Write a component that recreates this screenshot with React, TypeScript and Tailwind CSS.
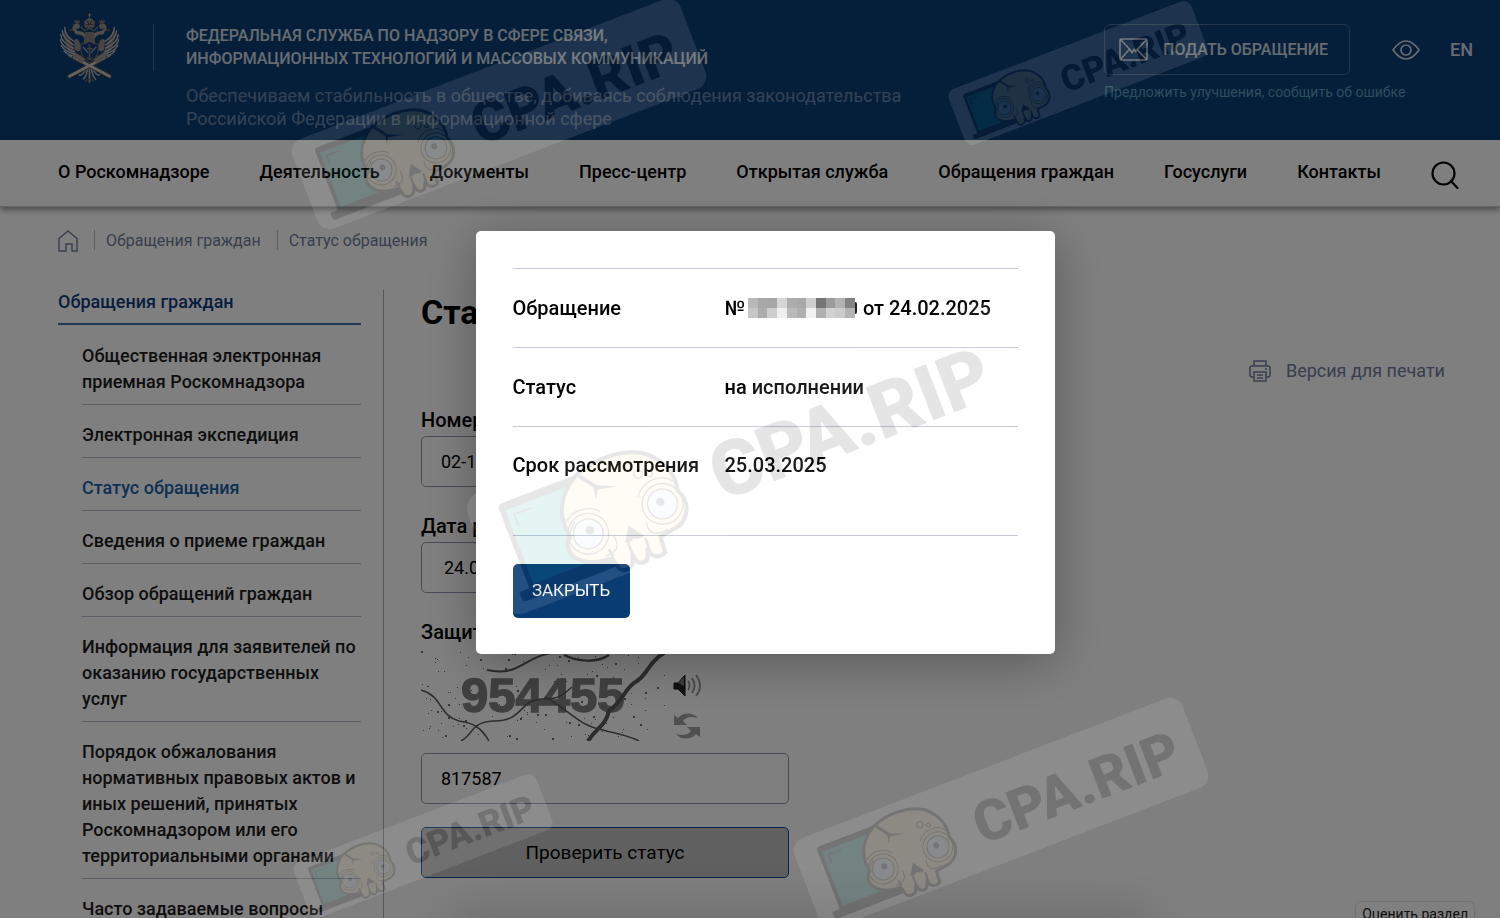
import { useState } from "react";

const navItems = [
  "О Роскомнадзоре",
  "Деятельность",
  "Документы",
  "Пресс-центр",
  "Открытая служба",
  "Обращения граждан",
  "Госуслуги",
  "Контакты",
];

const sideItems = [
  { title: "Общественная электронная приемная Роскомнадзора" },
  { title: "Электронная экспедиция" },
  { title: "Статус обращения", active: true },
  { title: "Сведения о приеме граждан" },
  { title: "Обзор обращений граждан" },
  { title: "Информация для заявителей по оказанию государственных услуг" },
  {
    title:
      "Порядок обжалования нормативных правовых актов и иных решений, принятых Роскомнадзором или его территориальными органами",
  },
  { title: "Часто задаваемые вопросы" },
];

// Greys of the blurred-out request number, two rows of cells
const mosaic = [
  ["#b9b9b9", "#a8a8a8", "#a6a6a6", "#d6d6d6", "#adadad", "#a9a9a9", "#cfcfcf", "#757575", "#9b9b9b", "#b3b3b3", "#838383"],
  ["#c6c6c6", "#ababab", "#cdcdcd", "#efefef", "#bababa", "#b0b0b0", "#f1f1f1", "#b0b0b0", "#d2d2d2", "#cccccc", "#b5b5b5"],
];

function Emblem() {
  const wing = (
    <g>
      <path d="M100 152C84 148 76 138 70 124C66 106 56 90 44 74C42 108 50 132 70 150C82 160 94 160 100 152Z" fill="#77726f" />
      <g stroke="#c6c1bd" strokeWidth="4" strokeLinecap="round" fill="none">
        <path d="M46 66C46 84 56 96 74 108" />
        <path d="M39 76C39 92 52 106 72 118" />
        <path d="M34 88C35 104 50 118 72 128" />
        <path d="M33 103C36 118 52 130 74 138" />
        <path d="M36 120C42 132 58 142 78 146" />
        <path d="M44 136C52 146 66 152 84 152" />
        <path d="M58 150C68 158 80 160 92 156" />
      </g>
      <path d="M74 104C86 92 92 112 96 128C90 140 84 140 76 132Z" fill="#918b86" />
      <path d="M112 104C108 88 98 82 86 82C80 84 78 78 82 74" fill="none" stroke="#a29c97" strokeWidth="10" />
      <path d="M70 76C66 64 74 52 84 54C92 56 94 64 88 70L78 70L76 78Z" fill="#98918a" />
      <path d="M74 52L76 42L81 48L84 40L87 48L92 44L90 54Z" fill="#7d756d" />
      <path d="M64 70L56 74L64 78L72 76Z" fill="#5f5952" />
    </g>
  );
  return (
    <svg viewBox="26 20 188 212" className="h-[71px] w-[63px] shrink-0" aria-label="Герб">
      {wing}
      <g transform="translate(240 0) scale(-1 1)">{wing}</g>
      <path d="M106 66L104 48L112 42L120 36L128 42L136 48L134 66Z" fill="#8f8780" />
      <path d="M108 58H132M112 46L120 58L128 46" stroke="#4d4740" strokeWidth="3" fill="none" />
      <path d="M120 36V24M115 29H125" stroke="#aaa49e" strokeWidth="3" />
      <path d="M94 64L106 76L120 68L134 76L146 64" stroke="#7d756d" strokeWidth="4" fill="none" />
      <path d="M108 80H132L138 116H102Z" fill="#88817b" />
      <path d="M94 116C104 116 112 114 120 108C128 114 136 116 146 116C148 148 138 162 120 172C102 162 92 148 94 116Z" fill="#123a76" stroke="#77716c" strokeWidth="3" />
      <path d="M120 116V164M112 130H129M113 156C116 162 124 162 127 156" stroke="#777069" strokeWidth="5" fill="none" />
      <path d="M100 124L116 142M140 124L124 142" stroke="#9fb4d3" strokeWidth="3" />
      <g stroke="#aea8a2" strokeWidth="5" strokeLinecap="round" fill="none">
        <path d="M120 188V228" />
        <path d="M114 190C112 204 108 216 102 220" />
        <path d="M126 190C128 204 132 216 138 220" />
        <path d="M110 188C102 204 96 210 90 208" />
        <path d="M130 188C138 204 144 210 150 208" />
        <path d="M108 226C114 220 126 220 132 226" stroke="#66615c" />
      </g>
      <path d="M60 212L166 156M180 212L74 156" stroke="#4d4844" strokeWidth="14" strokeLinecap="round" />
      <path d="M60 212L166 156M180 212L74 156" stroke="#c9c4be" strokeWidth="8" strokeLinecap="round" />
      <path d="M78 152L98 164M162 152L142 164" stroke="#9a948e" strokeWidth="15" strokeLinecap="round" />
    </svg>
  );
}

function Stamp({ className }: { className: string }) {
  return (
    <svg
      viewBox="0 0 416 96"
      aria-hidden="true"
      className={`absolute -translate-x-1/2 -translate-y-1/2 -rotate-[21deg] opacity-10 ${className}`}
    >
      <rect width="416" height="96" rx="14" fill="#fff" />
      <path d="M23 81V18Q23 14 27 14H98V81Z" fill="#1c1c1c" />
      <path d="M27 78V20H94V78Z" fill="#00a89f" />
      <path d="M32 34V25H46" fill="none" stroke="#1c1c1c" strokeWidth="1.5" />
      <path d="M15 80H104V88H18Q15 88 15 85Z" fill="#1c1c1c" />
      <path
        d="M65 55C61 39 68 24 84 15C100 8 123 8 137 17C149 26 154 39 151 52C157 63 151 74 141 77L127 79L126 91Q120 94 116 89L115 84L112 91Q108 94 104 90L103 84L100 91Q94 95 90 90L88 81C76 81 65 77 61 68C59 62 61 58 65 55Z"
        fill="#fbe99a"
        stroke="#1c1c1c"
        strokeWidth="3"
        strokeLinejoin="round"
      />
      <path d="M103 85V75M116 85V76M89 80L88 74" stroke="#1c1c1c" strokeWidth="2" />
      <g fill="none" stroke="#1c1c1c" strokeWidth="1">
        <circle cx="78" cy="58" r="15" />
        <circle cx="137" cy="57" r="15" />
        <path d="M66 44C74 36 88 40 92 46M122 46C128 36 144 35 150 44M66 52L72 46" />
        <path d="M95 66C97 76 92 78 84 78M121 65C119 76 126 77 134 76" />
        <circle cx="128" cy="30" r="3" />
        <circle cx="136" cy="33" r="2" />
      </g>
      <g fill="#d9ebff" stroke="#1c1c1c" strokeWidth="1">
        <circle cx="78" cy="58" r="11" />
        <circle cx="137" cy="57" r="11" />
      </g>
      <circle cx="80" cy="56" r="3" fill="#1c1c1c" />
      <circle cx="136" cy="55" r="3" fill="#1c1c1c" />
      <path d="M84 14L94 28L92 37L96 30L111 33L97 27L88 15Z" fill="#1c1c1c" />
      <path d="M108 63Q112 69 116 74Q112 76 108 73Q104 76 101 74Q104 69 108 63Z" fill="#1c1c1c" />
      <text x="179" y="71" fontSize="57" fontWeight="900" fill="#111" fontFamily="Roboto, Liberation Sans, sans-serif">
        CPA.RIP
      </text>
    </svg>
  );
}

// Noise specks of the captcha, spread with a small fixed generator
const specks = Array.from({ length: 150 }, (_, i) => ({
  x: (i * 73 + ((i * i) % 29) * 7) % 244,
  y: (i * 37 + ((i * i) % 17) * 5) % 89,
  r: i % 4 === 0 ? 2 : 1,
}));

function Captcha() {
  return (
    <svg viewBox="0 0 246 90" className="h-[90px] w-[246px]" role="img" aria-label="Защитный код">
      {specks.map((s, i) => (
        <rect key={i} x={s.x} y={s.y} width={s.r} height={s.r} fill="#6b6b6b" />
      ))}
      <text
        x="40"
        y="61"
        fontSize="49"
        fontWeight="700"
        fill="#808080"
        stroke="#808080"
        strokeWidth="1.5"
        fontFamily="Liberation Sans, sans-serif"
      >
        954455
      </text>
      <g fill="none" stroke="#5a5a5a">
        <path d="M0 39C22 45 17 64 38 70C52 72 60 76 68 90" strokeWidth="1.5" />
        <path d="M40 90C52 84 50 71 72 70C104 71 98 46 124 48C138 48 142 44 151 36" strokeWidth="1.5" />
        <path d="M124 46C150 60 156 74 182 79C196 83 206 84 218 90" strokeWidth="1.5" />
        <path d="M66 19C98 26 103 6 130 2" strokeWidth="2" />
        <path d="M143 4C157 11 176 12 188 4" strokeWidth="2.5" />
        <path d="M167 90C176 76 184 76 188 60C204 48 204 36 216 30C228 22 226 12 246 0" strokeWidth="4" />
      </g>
    </svg>
  );
}

export default function App() {
  const [open, setOpen] = useState(true);
  const [requestNumber, setRequestNumber] = useState("02-1");
  const [requestDate, setRequestDate] = useState("24.02.2025");
  const [code, setCode] = useState("817587");

  return (
    <div className="relative h-screen overflow-hidden bg-white font-['Roboto','Liberation_Sans',sans-serif] text-black">
      {/* Header */}
      <header className="flex h-[140px] items-start bg-[#0a3c74] pr-[27px] pl-[58px] text-white">
        <div className="pt-3">
          <Emblem />
        </div>
        <div className="mt-6 ml-8 h-[47px] w-px bg-white/25" />
        <div className="ml-8 flex-1 pt-6">
          <p className="text-base leading-[23px] font-medium text-white/80">
            ФЕДЕРАЛЬНАЯ СЛУЖБА ПО НАДЗОРУ В СФЕРЕ СВЯЗИ,
            <br />
            ИНФОРМАЦИОННЫХ ТЕХНОЛОГИЙ И МАССОВЫХ КОММУНИКАЦИЙ
          </p>
          <p className="mt-[14px] text-lg leading-[23px] text-white/40">
            Обеспечиваем стабильность в обществе, добиваясь соблюдения законодательства
            <br />
            Российской Федерации в информационной сфере
          </p>
        </div>
        <div className="w-[296px] pt-6">
          <button className="flex h-[51px] w-[246px] items-center gap-[15px] rounded-md border border-white/25 pl-[14px] text-base font-medium whitespace-nowrap text-white/80">
            <svg viewBox="0 0 29 23" className="h-[23px] w-[29px]" fill="none" stroke="currentColor" strokeWidth="1.6">
              <rect x="1" y="1" width="27" height="21" rx="1.5" />
              <path d="M1.5 1.5L10.500 11L13 14.500L15 11.500L16.500 13.500L27.500 1.500M1.500 21.500L10.500 11M27.500 21.500L18 11.500" />
            </svg>
            ПОДАТЬ ОБРАЩЕНИЕ
          </button>
          <a href="#feedback" className="mt-[7px] block text-sm leading-5 whitespace-nowrap text-[#58a0b8]">
            Предложить улучшения, сообщить об ошибке
          </a>
        </div>
        <div className="-ml-2 flex items-center gap-[30px] pt-[38px] text-white/80">
          <button aria-label="Версия для слабовидящих">
            <svg viewBox="0 0 28 20" className="h-5 w-7" fill="none" stroke="currentColor" strokeWidth="1.7">
              <path d="M1 10C6 3 10 1 14 1C18 1 22 3 27 10C22 17 18 19 14 19C10 19 6 17 1 10Z" />
              <circle cx="14" cy="10" r="5" />
            </svg>
          </button>
          <a href="#en" className="text-lg leading-6 font-medium">
            EN
          </a>
        </div>
      </header>

      {/* Main menu */}
      <nav className="relative flex h-[67px] items-center justify-between border-b border-[#c4ccd6] bg-white pr-[41px] pl-[58px] text-lg font-medium whitespace-nowrap shadow-[0_3px_6px_rgba(0,0,0,0.4)]">
        {navItems.map((item) => (
          <a key={item} href="#menu" className="pb-[3px]">
            {item}
          </a>
        ))}
        <button aria-label="Поиск">
          <svg viewBox="0 0 28 28" className="mt-1 h-7 w-7" fill="none" stroke="currentColor" strokeWidth="2.2">
            <circle cx="12.5" cy="12.5" r="11" />
            <path d="M20 20L26.500 27" strokeLinecap="round" />
          </svg>
        </button>
      </nav>

      {/* Breadcrumbs */}
      <div className="flex h-[83px] items-start pt-[23px] pl-[58px] text-base leading-[22px] text-[#6f7d9c]">
        <a href="#home" aria-label="Главная">
          <svg viewBox="0 0 20 22" className="h-[22px] w-5" fill="none" stroke="currentColor" strokeWidth="1.4">
            <path d="M1 8.500L10 1L19 8.500V21H14V14H8V21H1Z" />
          </svg>
        </a>
        <span className="ml-4 h-5 border-l border-[#b5bccb]" />
        <a href="#requests" className="ml-[11px]">
          Обращения граждан
        </a>
        <span className="ml-4 h-5 border-l border-[#b5bccb]" />
        <a href="#status" className="ml-[11px]">
          Статус обращения
        </a>
      </div>

      <div className="flex pl-[58px]">
        {/* Sidebar */}
        <aside className="h-[700px] w-[326px] shrink-0 border-r border-[#a5adbd] pr-[22px] text-lg leading-[26px] font-medium">
          <a href="#requests" className="block h-[35px] border-b-2 border-[#3f73ae] leading-6 text-[#0f3d7c]">
            Обращения граждан
          </a>
          <ul className="ml-6 pt-px">
            {sideItems.map((item) => (
              <li key={item.title} className="border-b border-[#b9bfcc] pt-[17px] pb-[9px]">
                <a href="#section" className={item.active ? "text-[#1c5fa8]" : "text-[#1c1c1c]"}>
                  {item.title}
                </a>
              </li>
            ))}
          </ul>
        </aside>

        {/* Status form */}
        <main className="flex-1 pr-[55px] pl-[37px]">
          <h1 className="text-[34px] leading-[44px] font-bold">Статус обращения</h1>
          <div className="mt-[25px] flex justify-end">
            <a href="#print" className="flex items-center gap-[15px] text-lg leading-6 text-[#6f7d9c]">
              <svg viewBox="0 0 22 22" className="h-[22px] w-[22px]" fill="none" stroke="currentColor" strokeWidth="1.5">
                <path d="M5 6V1H17V6M5 17H3Q1 17 1 15V8Q1 6 3 6H19Q21 6 21 8V15Q21 17 19 17H17M5 12H17V21H5ZM8 15H14M8 18H14M16 9H18" />
              </svg>
              Версия для печати
            </a>
          </div>
          <form className="-mt-px w-[368px] text-lg" onSubmit={(e) => e.preventDefault()}>
            <label htmlFor="number" className="mt-6 block text-xl leading-7 font-medium">
              Номер
            </label>
            <input
              id="number"
              value={requestNumber}
              onChange={(e) => setRequestNumber(e.target.value)}
              className="mt-[2px] h-[51px] w-full rounded-[5px] border border-[#8f97a8] px-[19px]"
            />
            <label htmlFor="date" className="mt-[25px] block text-xl leading-7 font-medium">
              Дата регистрации
            </label>
            <input
              id="date"
              value={requestDate}
              onChange={(e) => setRequestDate(e.target.value)}
              className="mt-[2px] h-[51px] w-full rounded-[5px] border border-[#8f97a8] px-[22px]"
            />
            <label htmlFor="code" className="mt-[25px] block text-xl leading-7 font-medium">
              Защитный код
            </label>
            <div className="mt-[5px] flex gap-[6px]">
              <Captcha />
              <div className="flex flex-col gap-[14px] pt-[23px]">
                <button type="button" aria-label="Прослушать код">
                  <svg viewBox="0 0 30 24" className="h-6 w-[30px]" fill="none">
                    <path d="M1 9H5L12 1V22L5 15H1Z" fill="#222" stroke="#111" />
                    <path d="M5 9L11 3V12Z" fill="#777" />
                    <path d="M15 7Q18 12 15 16M19 4Q24 12 19 19M23 1Q31 12 23 22" stroke="#999" strokeWidth="2" />
                  </svg>
                </button>
                <button type="button" aria-label="Обновить код">
                  <svg viewBox="0 0 28 28" className="h-7 w-7" fill="#a0a0a0">
                    <path d="M1 3L5 6C10 0 20 0 25 6C18 4 13 5 10 9L14 13H1Z" />
                    <path d="M27 25L23 22C18 28 8 28 3 22C10 24 15 23 18 19L14 15H27Z" />
                  </svg>
                </button>
              </div>
            </div>
            <input
              id="code"
              value={code}
              onChange={(e) => setCode(e.target.value)}
              className="mt-3 block h-[51px] w-full rounded-[5px] border border-[#8f97a8] px-[19px]"
            />
            <button className="mt-[23px] h-[51px] w-full rounded-[5px] border border-[#0a4a94] bg-[#c0c0c0] text-[19px]">
              Проверить статус
            </button>
          </form>
        </main>
      </div>

      <button className="absolute right-[25px] bottom-[-9px] h-[26px] rounded-md border border-[#e4e4e4] px-[6px] text-sm whitespace-nowrap text-[#222] shadow">
        Оценить раздел
      </button>
      <div className="absolute -bottom-5 left-[450px] h-5 w-[700px] shadow-[0_0_50px_rgba(0,0,0,0.3)]" />

      {/* Result dialog */}
      {open && (
        <div className="fixed inset-0 flex items-start justify-center bg-black/50 pt-[231px] pl-[30px]">
          <div
            role="dialog"
            aria-modal="true"
            className="w-full max-w-[579px] rounded-[5px] bg-white px-[37px] pt-[37px] pb-9 shadow-[0_8px_50px_rgba(0,0,0,0.3)]"
          >
            <table className="w-full border-t border-[#c5cad6] text-xl leading-7 font-medium">
              <tbody>
                <tr className="h-[79px] border-b border-[#c5cad6]">
                  <th className="w-[212px] text-left font-medium">Обращение</th>
                  <td>
                    <div className="flex items-center whitespace-nowrap">
                      <span>№</span>
                      <span className="ml-[3px] grid w-[107px] grid-cols-11">
                        {mosaic.flat().map((color, i) => (
                          <span key={i} className="h-[10px]" style={{ backgroundColor: color }} />
                        ))}
                      </span>
                      {/* edge of the last digit that the blur leaves visible */}
                      <span className="h-3 w-[2px] rounded-r-full bg-[#222]" />
                      <span className="ml-[6px]">от 24.02.2025</span>
                    </div>
                  </td>
                </tr>
                <tr className="h-[79px] border-b border-[#c5cad6]">
                  <th className="text-left font-medium">Статус</th>
                  <td>на исполнении</td>
                </tr>
                <tr className="h-[109px] border-b border-[#c5cad6] align-top">
                  <th className="pt-6 text-left font-medium whitespace-nowrap">Срок рассмотрения</th>
                  <td className="pt-6">25.03.2025</td>
                </tr>
              </tbody>
            </table>
            <button
              onClick={() => setOpen(false)}
              className="mt-7 block h-[54px] w-[117px] rounded-[5px] bg-[#0a3c74] text-[17px] text-white"
            >
              ЗАКРЫТЬ
            </button>
          </div>
        </div>
      )}

      {/* Stamps over the whole page */}
      <div className="pointer-events-none fixed inset-0 overflow-hidden">
        <Stamp className="top-[114px] left-[499px] w-[416px]" />
        <Stamp className="top-[73px] left-[1078px] w-[260px]" />
        <Stamp className="top-[458px] left-[748px] w-[564px]" />
        <Stamp className="top-[846px] left-[423px] w-[260px]" />
        <Stamp className="top-[813px] left-[1001px] w-[416px]" />
      </div>
    </div>
  );
}
